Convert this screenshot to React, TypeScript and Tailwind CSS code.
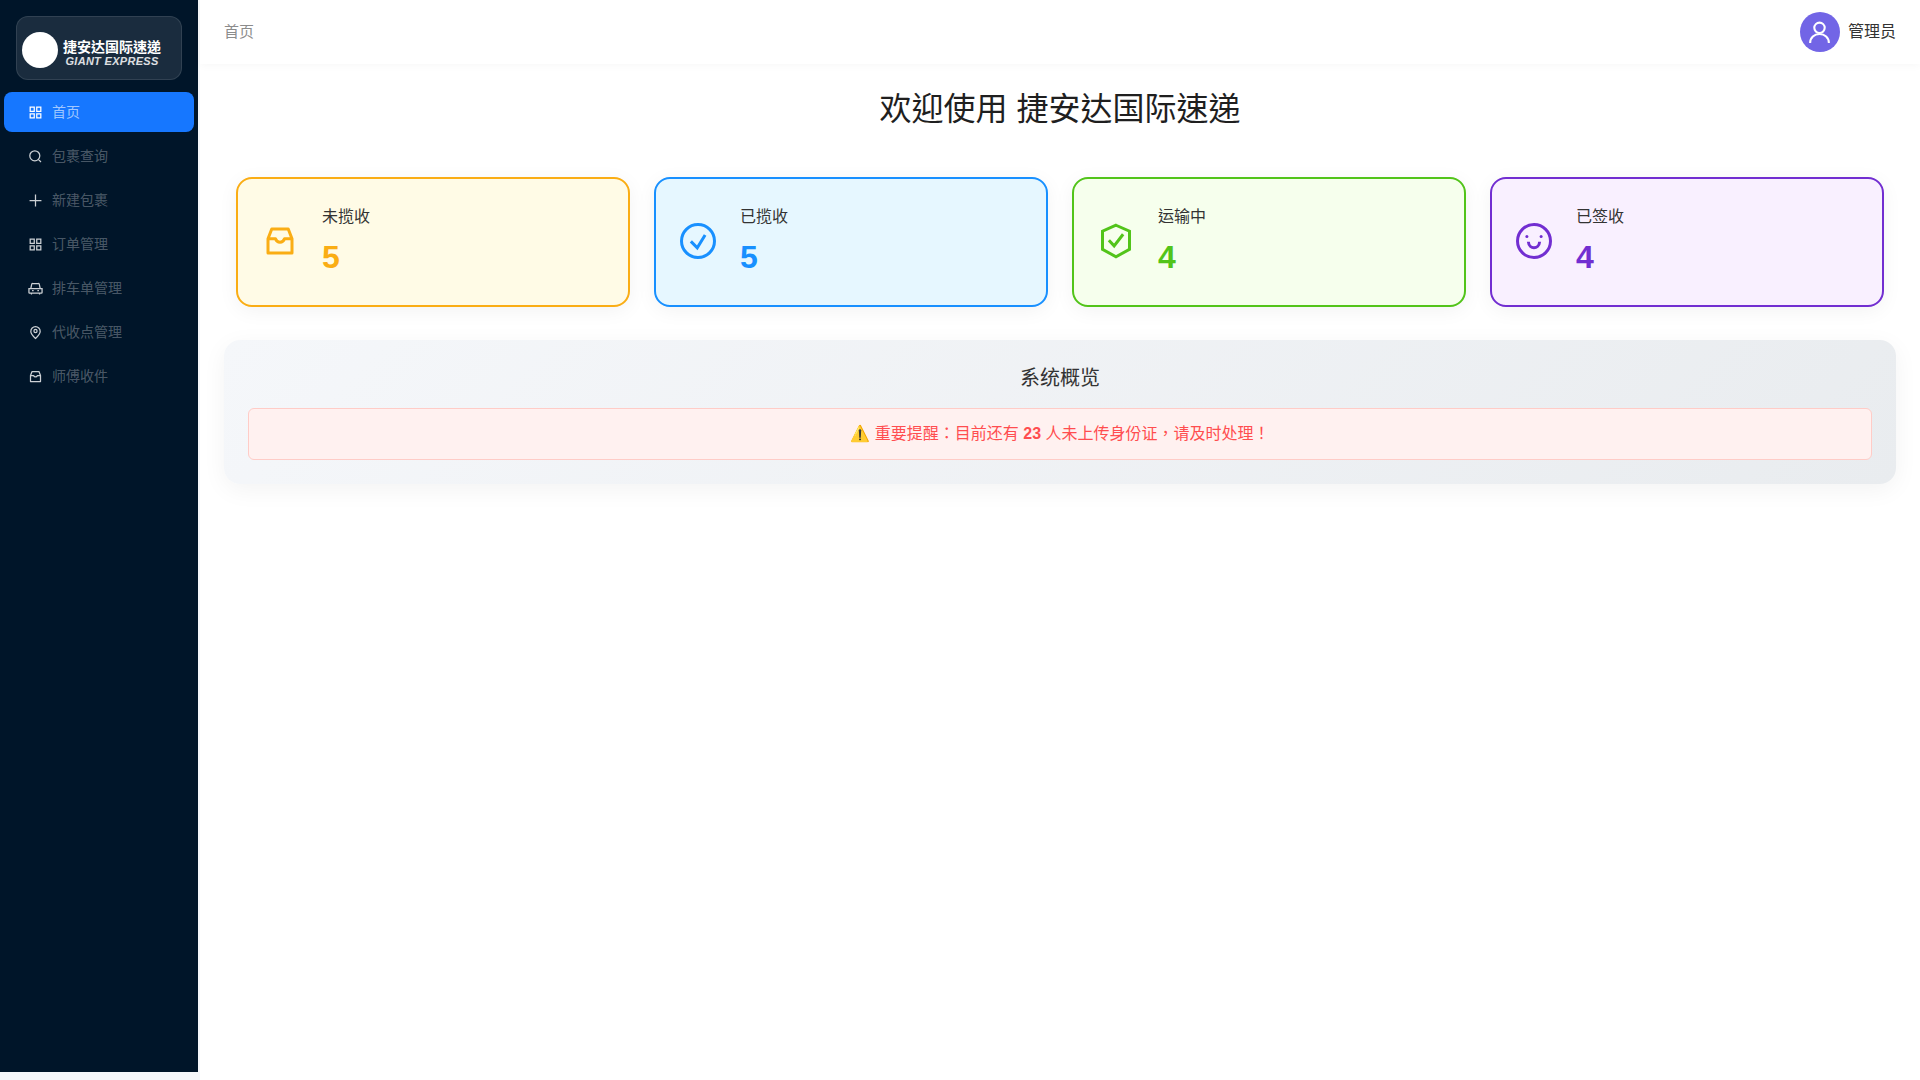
import type { ReactNode } from 'react'

type IconProps = { className?: string }

const Svg = ({ className, children }: IconProps & { children: ReactNode }) => (
  <svg viewBox="0 0 48 48" fill="none" stroke="currentColor" strokeWidth={4} className={className} aria-hidden="true">
    {children}
  </svg>
)

const Apps = ({ className }: IconProps) => (
  <Svg className={className}>
    <path d="M7 7h13v13H7zM28 7h13v13H28zM7 28h13v13H7zM28 28h13v13H28z" />
  </Svg>
)
const Search = ({ className }: IconProps) => (
  <Svg className={className}>
    <path d="M33.072 33.071c6.248-6.248 6.248-16.379 0-22.627-6.249-6.249-16.38-6.249-22.628 0-6.248 6.248-6.248 16.379 0 22.627 6.248 6.248 16.379 6.248 22.628 0Zm0 0 8.485 8.485" />
  </Svg>
)
const Plus = ({ className }: IconProps) => (
  <Svg className={className}>
    <path d="M5 24h38M24 5v38" />
  </Svg>
)
const Car = ({ className }: IconProps) => (
  <Svg className={className}>
    <path d="M3 24h42v13a2 2 0 0 1-2 2H5a2 2 0 0 1-2-2V24ZM9 24l3-14a3 3 0 0 1 3-2h18a3 3 0 0 1 3 2l3 14M11 39v4M37 39v4M13 31h5M30 31h5" />
  </Svg>
)
const Pin = ({ className }: IconProps) => (
  <Svg className={className}>
    <circle cx="24" cy="19" r="5" />
    <path d="M39 20.405C39 28.914 24 43 24 43S9 28.914 9 20.405C9 11.897 15.716 5 24 5c8.284 0 15 6.897 15 15.405Z" />
  </Svg>
)
const Inbox = ({ className }: IconProps) => (
  <Svg className={className}>
    <path d="M13 8h22l5 13v19H8V21l5-13ZM8 21h10c1 3 3 4.500 6 4.500s5-1.500 6-4.500h10" strokeLinejoin="round" />
  </Svg>
)
const CheckCircle = ({ className }: IconProps) => (
  <Svg className={className}>
    <circle cx="24" cy="24" r="22" />
    <path d="M14.500 24.500 23 33l10.500-17" />
  </Svg>
)
const Shield = ({ className }: IconProps) => (
  <Svg className={className}>
    <path d="M24 3 42 11v24L24 45 6 35V11L24 3ZM14.500 23l7 7.500L33.500 15" />
  </Svg>
)
const Smile = ({ className }: IconProps) => (
  <Svg className={className}>
    <circle cx="24" cy="24" r="22" />
    <path d="M16.500 25C17 31 21 33 24 33s7-2 7.500-8" />
    <circle cx="14.500" cy="18" r="2" fill="currentColor" stroke="none" />
    <circle cx="33.500" cy="18" r="2" fill="currentColor" stroke="none" />
  </Svg>
)
const User = ({ className }: IconProps) => (
  <Svg className={className}>
    <circle cx="24" cy="15" r="10" />
    <path d="M6 44c0-10 8-17 18-17s18 7 18 17" />
  </Svg>
)

const menu = [
  { label: '首页', icon: Apps, active: true },
  { label: '包裹查询', icon: Search },
  { label: '新建包裹', icon: Plus },
  { label: '订单管理', icon: Apps },
  { label: '排车单管理', icon: Car },
  { label: '代收点管理', icon: Pin },
  { label: '师傅收件', icon: Inbox },
]

const stats = [
  { label: '未揽收', value: 5, icon: Inbox, box: 'border-[#faad14] bg-[#fffbe6]', color: 'text-[#faad14]' },
  { label: '已揽收', value: 5, icon: CheckCircle, box: 'border-[#1890ff] bg-[#e6f7ff]', color: 'text-[#1890ff]' },
  { label: '运输中', value: 4, icon: Shield, box: 'border-[#52c41a] bg-[#f6ffed]', color: 'text-[#52c41a]' },
  { label: '已签收', value: 4, icon: Smile, box: 'border-[#722ed1] bg-[#f9f0ff]', color: 'text-[#722ed1]' },
]

export default function App() {
  return (
    <div className="flex h-[1080px] bg-white [font-family:'Liberation_Sans','Noto_Sans_CJK_TC',sans-serif] text-[#1f1f1f]">
      <div className="w-[200px] shrink-0 bg-[#f5f7fa]">
        <aside className="h-[1072px] w-[198px] bg-[#001529] pt-4">
          <div className="mx-4 flex h-16 w-[166px] items-center rounded-xl border border-white/10 bg-white/10 pt-1 pl-[5px]">
            <div className="h-9 w-9 shrink-0 rounded-full bg-white" />
            <div className="mt-[5px] ml-1 flex w-[100px] flex-col items-center text-white">
              <span className="text-[14px] leading-[17px] font-bold whitespace-nowrap">捷安达国际速递</span>
              <span className="text-[11px] leading-[11px] font-bold tracking-[0.3px] whitespace-nowrap text-white/85 italic">GIANT EXPRESS</span>
            </div>
          </div>
          <nav className="mt-3 flex flex-col gap-1">
            {menu.map(({ label, icon: Icon, active }) => (
              <div
                key={label}
                className={
                  'mx-1 flex h-10 w-[190px] items-center rounded-lg pl-6 text-[14px] ' +
                  (active ? 'bg-[#1677ff] text-white/60' : 'text-white/30')
                }
              >
                <Icon className={'-mx-[0.5px] h-[15px] w-[15px] shrink-0 ' + (active ? 'text-white' : 'text-white/80')} />
                <span className="ml-[10px]">{label}</span>
              </div>
            ))}
          </nav>
        </aside>
      </div>

      <div className="flex min-w-0 flex-1 flex-col">
        <header className="flex h-16 items-center justify-between bg-white pr-6 pl-6 shadow-[0_2px_8px_rgba(0,0,0,0.03)]">
          <span className="text-[15px] text-[#8c8c8c]">首页</span>
          <div className="flex items-center gap-2">
            <div className="flex h-10 w-10 items-center justify-center rounded-full bg-[#7265e6] text-white">
              <User className="h-[25px] w-[25px]" />
            </div>
            <span className="text-[16px] text-[#333]">管理员</span>
          </div>
        </header>

        <main>
          <h1 className="mt-[21px] text-center text-[32px] leading-12 font-normal">欢迎使用 捷安达国际速递</h1>
          <div className="mx-9 mt-11 grid grid-cols-4 gap-6">
            {stats.map(({ label, value, icon: Icon, box, color }) => (
              <div key={label} className={'flex h-[130px] items-center rounded-2xl border-2 pl-6 shadow-[0_4px_20px_rgba(0,0,0,0.05)] ' + box}>
                <Icon className={'mb-0.5 h-9 w-9 shrink-0 ' + color} />
                <div className="ml-6">
                  <div className="text-[16px] leading-6 text-[#333]">{label}</div>
                  <div className={'mt-[6px] text-[32px] leading-[44px] font-bold ' + color}>{value}</div>
                </div>
              </div>
            ))}
          </div>
          <section className="mx-6 mt-[33px] h-[144px] rounded-2xl bg-[linear-gradient(135deg,#f5f7fa,#e9ecef)] px-6 pt-6 shadow-[0_6px_24px_rgba(0,0,0,0.05)]">
            <h2 className="text-center text-[20px] leading-7 font-normal text-[#333]">系统概览</h2>
            <div className="mt-[16px] flex h-[52px] items-center justify-center rounded-md border border-[#ffccc7] bg-[#fff1f0] text-[16px] text-[#ff4d4f]">
              <span>
                ⚠️ 重要提醒：目前还有 <strong>23</strong> 人未上传身份证，请及时处理！
              </span>
            </div>
          </section>
        </main>
      </div>
    </div>
  )
}
